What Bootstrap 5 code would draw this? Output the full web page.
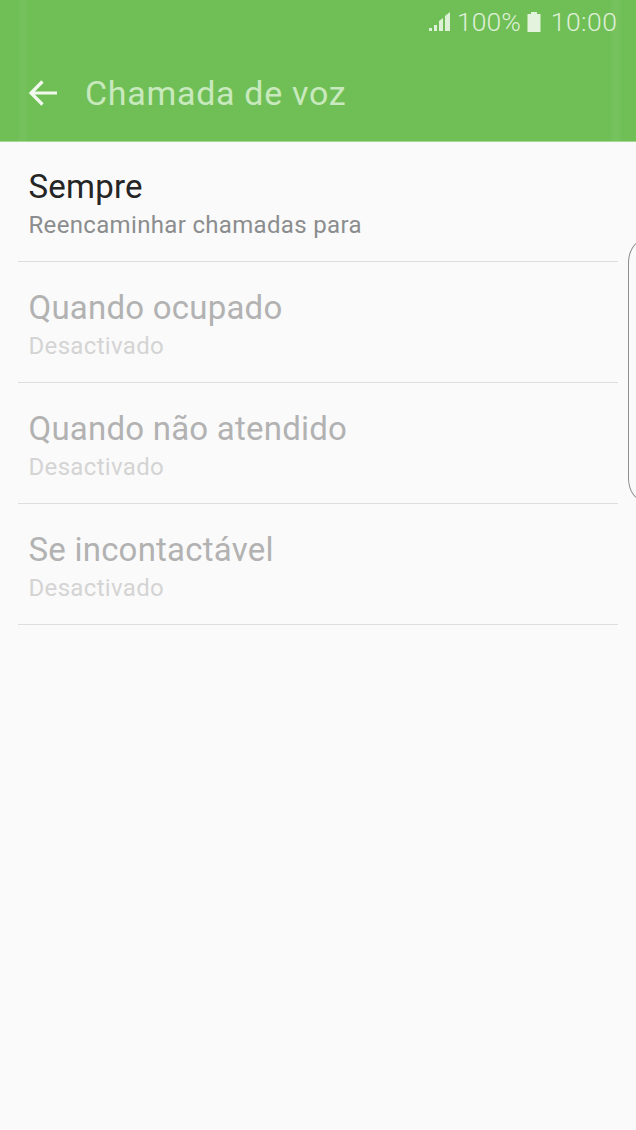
<!DOCTYPE html>
<html lang="pt">
<head>
<meta charset="utf-8">
<link href="https://cdn.jsdelivr.net/npm/bootstrap@5.3.0/dist/css/bootstrap.min.css" rel="stylesheet">
<style>
html,body{margin:0;height:1130px;overflow:hidden;}
body{background:#fafafa;font-family:Roboto,"Liberation Sans",sans-serif;position:relative;width:636px;}
.topband{height:142px;border-bottom:1px solid #a5d694;background:linear-gradient(90deg,#70bf56 0,#70bf56 18px,#75c15c 20px,#75c15c 26px,#70bf56 28px,#70bf56 610px,#76c25d 614px,#76c25d 618px,#70bf56 622px);}
.statusline{height:44px;padding-right:19px;color:#dff0d8;font-size:26.500px;font-weight:300;line-height:44px;gap:6px;}
.clocktext{letter-spacing:.45px;margin-left:4px;margin-right:-.45px;}
.titleline{height:97px;padding-left:28px;}
.titletext{color:#c8e9bd;font-size:34px;line-height:1;margin-left:27px;letter-spacing:.7px;}
.rowlist{padding:0 18px;margin-top:-1px;}
.setrow{height:121px;border-bottom:1px solid #dedede;padding:27px 0 0 10.500px;}
.maintext{font-size:33px;line-height:38px;color:#252525;letter-spacing:.22px;}
.subtext{font-size:24px;line-height:38px;color:#8b8d8e;letter-spacing:.33px;}
.rowoff .maintext{color:#b2b2b2;}
.rowoff .subtext{color:#d4d4d4;}
.edgehandle{position:absolute;left:628px;top:241px;width:20px;height:259px;border:1px solid #8f8f8f;border-radius:14px 0 0 14px/22px 0 0 22px;}
</style>
</head>
<body>
<div class="topband">
  <div class="statusline d-flex justify-content-end align-items-center">
    <svg width="23" height="22" viewBox="0 0 23 22" aria-hidden="true"><g fill="#dff0d8"><rect x="1" y="17" width="3" height="3"/><rect x="6" y="14" width="3" height="6"/><path d="M11 20V10l4-3v13z"/><path d="M17 20V5l5-4v19z"/></g></svg>
    <span>100%</span>
    <svg width="14" height="22" viewBox="0 0 14 22" aria-hidden="true"><path fill="#e4f3de" d="M4 1h6v2h3.500v18H.5V3H4z"/></svg>
    <span class="clocktext">10:00</span>
  </div>
  <div class="titleline d-flex align-items-center">
    <svg width="30" height="28" viewBox="0 0 30 28" aria-hidden="true"><path fill="none" stroke="#f1f9ee" stroke-width="3.200" d="M29 14H3M14.500 2.500 3 14l11.500 11.500"/></svg>
    <span class="titletext">Chamada de voz</span>
  </div>
</div>
<div class="rowlist">
  <div class="setrow"><div class="maintext">Sempre</div><div class="subtext">Reencaminhar chamadas para</div></div>
  <div class="setrow rowoff"><div class="maintext">Quando ocupado</div><div class="subtext">Desactivado</div></div>
  <div class="setrow rowoff"><div class="maintext">Quando não atendido</div><div class="subtext">Desactivado</div></div>
  <div class="setrow rowoff"><div class="maintext">Se incontactável</div><div class="subtext">Desactivado</div></div>
</div>
<div class="edgehandle"></div>
<script src="https://cdn.jsdelivr.net/npm/bootstrap@5.3.0/dist/js/bootstrap.bundle.min.js"></script>
</body>
</html>
